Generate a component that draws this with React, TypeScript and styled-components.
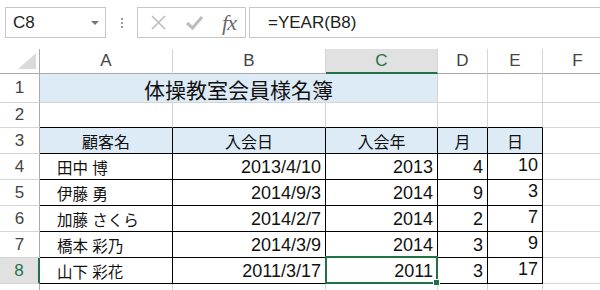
import React from 'react';
import styled, { createGlobalStyle, css } from 'styled-components';

const GlobalStyle = createGlobalStyle`
  html, body {
    margin: 0;
    padding: 0;
    background: #ffffff;
    overflow: hidden;
  }
  body {
    font-family: "Liberation Sans", "Noto Sans CJK JP", sans-serif;
  }
`;

const GREEN = '#217346';
const GRID = '#d4d4d4';
const HEAD_LINE = '#ababab';
const BLUE = '#ddebf7';

const Sheet = styled.div`
  width: 600px;
  height: 290px;
  overflow: hidden;
`;

const Toolbar = styled.div`
  display: flex;
  align-items: center;
  height: 31px;
  padding: 7px 0 0 5px;
  margin-bottom: 11px;
`;

const NameBox = styled.div`
  display: flex;
  align-items: center;
  justify-content: space-between;
  box-sizing: border-box;
  width: 101px;
  height: 31px;
  border: 1px solid #c6c6c6;
  padding: 0 6px 0 7px;
  font-size: 17px;
  color: #222;
`;

const Caret = styled.span`
  width: 0;
  height: 0;
  border-left: 4px solid transparent;
  border-right: 4px solid transparent;
  border-top: 4px solid #777;
`;

const Grip = styled.div`
  display: flex;
  flex-direction: column;
  gap: 2px;
  margin: 0 14px 0 15px;
  span {
    width: 2px;
    height: 2px;
    background: #9a9a9a;
  }
`;

const ButtonGroup = styled.div`
  display: flex;
  align-items: center;
  justify-content: space-between;
  box-sizing: border-box;
  width: 109px;
  height: 31px;
  border: 1px solid #c6c6c6;
  padding: 0 9px 0 12px;
  margin-right: 3px;
`;

const Fx = styled.span`
  font-family: "Liberation Serif", serif;
  font-style: italic;
  font-size: 22px;
  color: #6a6a6a;
  letter-spacing: -1px;
`;

const FormulaBox = styled.div`
  flex: 1;
  display: flex;
  align-items: center;
  box-sizing: border-box;
  height: 31px;
  border: 1px solid #c6c6c6;
  border-right: none;
  padding-left: 18px;
  font-size: 17px;
  color: #222;
`;

const Grid = styled.div`
  display: grid;
  grid-template-columns: 40px 133px 153px 112px 50px 55px 70px;
  grid-template-rows: 25px 29px 25px 26px 26px 26px 26px 26px 26px 26px;
`;

const ColHead = styled.div<{ $active?: boolean }>`
  position: relative;
  display: flex;
  align-items: center;
  justify-content: center;
  box-sizing: border-box;
  border-right: 1px solid ${GRID};
  border-bottom: 1px solid ${HEAD_LINE};
  font-size: 17px;
  color: #444;
  ${(p) =>
    p.$active &&
    css`
      background: #e1e1e1;
      color: ${GREEN};
      border-bottom: 2px solid ${GREEN};
    `}
`;

const Corner = styled(ColHead)`
  border-right: 1px solid ${HEAD_LINE};
  align-items: flex-end;
  justify-content: flex-end;
  padding: 0 3px 4px 0;
`;

const RowHead = styled.div<{ $active?: boolean }>`
  display: flex;
  align-items: center;
  justify-content: center;
  box-sizing: border-box;
  border-right: 1px solid ${HEAD_LINE};
  border-bottom: 1px solid ${GRID};
  font-size: 17px;
  color: #444;
  ${(p) =>
    p.$active &&
    css`
      background: #e1e1e1;
      color: ${GREEN};
      border-right: 2px solid ${GREEN};
    `}
`;

type Align = 'left' | 'center' | 'right';

const Cell = styled.div<{
  $align?: Align;
  $boxed?: boolean;
  $topEdge?: boolean;
  $fill?: boolean;
  $span?: number;
  $size?: number;
  $lift?: boolean;
  $raised?: boolean;
}>`
  position: relative;
  z-index: ${(p) => (p.$raised ? 2 : 'auto')};
  display: flex;
  align-items: center;
  justify-content: ${(p) =>
    p.$align === 'right' ? 'flex-end' : p.$align === 'center' ? 'center' : 'flex-start'};
  box-sizing: border-box;
  padding: ${(p) => (p.$align === 'left' ? '1px 0 0 17px' : '1px 4px 0 4px')};
  padding-bottom: ${(p) => (p.$lift ? '4px' : '0')};
  grid-column: ${(p) => (p.$span ? `span ${p.$span}` : 'auto')};
  border-right: 1px solid ${(p) => (p.$boxed ? '#000' : GRID)};
  border-bottom: 1px solid ${(p) => (p.$boxed || p.$topEdge ? '#000' : GRID)};
  background: ${(p) => (p.$fill ? BLUE : '#fff')};
  font-size: ${(p) => p.$size ?? 18}px;
  color: #111;
  white-space: nowrap;
`;

const Selection = styled.div`
  position: absolute;
  left: -1px;
  top: -2px;
  right: -1px;
  bottom: -1px;
  border: 2px solid ${GREEN};
  pointer-events: none;
  &::after {
    content: '';
    position: absolute;
    right: -4px;
    bottom: -4px;
    width: 5px;
    height: 5px;
    background: ${GREEN};
    border: 1px solid #fff;
  }
`;

const columns = ['A', 'B', 'C', 'D', 'E', 'F'];

const members = [
  { name: '田中 博', date: '2013/4/10', year: '2013', month: '4', day: '10' },
  { name: '伊藤 勇', date: '2014/9/3', year: '2014', month: '9', day: '3' },
  { name: '加藤 さくら', date: '2014/2/7', year: '2014', month: '2', day: '7' },
  { name: '橋本 彩乃', date: '2014/3/9', year: '2014', month: '3', day: '9' },
  { name: '山下 彩花', date: '2011/3/17', year: '2011', month: '3', day: '17' },
];

function Filler() {
  return <Cell />;
}

export default function App() {
  return (
    <>
      <GlobalStyle />
      <Sheet>
        <Toolbar>
          <NameBox>
            <span>C8</span>
            <Caret />
          </NameBox>
          <Grip>
            <span />
            <span />
            <span />
          </Grip>
          <ButtonGroup>
            <svg width="17" height="17" viewBox="0 0 17 17">
              <path d="M2 2 L15 15 M15 2 L2 15" stroke="#bdbdbd" strokeWidth="1.7" fill="none" />
            </svg>
            <svg width="19" height="17" viewBox="0 0 19 17">
              <path d="M2 9 L7.5 14 L17 3" stroke="#bdbdbd" strokeWidth="3.2" fill="none" />
            </svg>
            <Fx>fx</Fx>
          </ButtonGroup>
          <FormulaBox>=YEAR(B8)</FormulaBox>
        </Toolbar>

        <Grid>
          <Corner>
            <svg width="18" height="16" viewBox="0 0 18 16">
              <path d="M18 0 L18 16 L0 16 Z" fill="#dadada" />
            </svg>
          </Corner>
          {columns.map((c) => (
            <ColHead key={c} $active={c === 'C'}>
              {c}
            </ColHead>
          ))}

          {/* row 1: title */}
          <RowHead>1</RowHead>
          <Cell $span={3} $align="center" $fill $size={21}>
            体操教室会員様名簿
          </Cell>
          <Filler />
          <Filler />
          <Filler />

          {/* row 2 */}
          <RowHead>2</RowHead>
          <Cell $topEdge />
          <Cell $topEdge />
          <Cell $topEdge />
          <Cell $topEdge />
          <Cell $topEdge />
          <Filler />

          {/* row 3: header */}
          <RowHead>3</RowHead>
          <Cell $boxed $fill $align="center" $size={16}>顧客名</Cell>
          <Cell $boxed $fill $align="center" $size={16}>入会日</Cell>
          <Cell $boxed $fill $align="center" $size={16}>入会年</Cell>
          <Cell $boxed $fill $align="center" $size={16}>月</Cell>
          <Cell $boxed $fill $align="center" $size={16}>日</Cell>
          <Filler />

          {members.map((m, i) => {
            const row = i + 4;
            const selected = row === 8;
            return (
              <React.Fragment key={row}>
                <RowHead $active={selected}>{row}</RowHead>
                <Cell $boxed $align="left" $size={15.5}>{m.name}</Cell>
                <Cell $boxed $align="right">{m.date}</Cell>
                <Cell $boxed $align="right" $raised={selected}>
                  {m.year}
                  {selected && <Selection />}
                </Cell>
                <Cell $boxed $align="right">{m.month}</Cell>
                <Cell $boxed $align="right" $lift>{m.day}</Cell>
                <Filler />
              </React.Fragment>
            );
          })}

          <RowHead>9</RowHead>
          <Filler />
          <Filler />
          <Filler />
          <Filler />
          <Filler />
          <Filler />
        </Grid>
      </Sheet>
    </>
  );
}
